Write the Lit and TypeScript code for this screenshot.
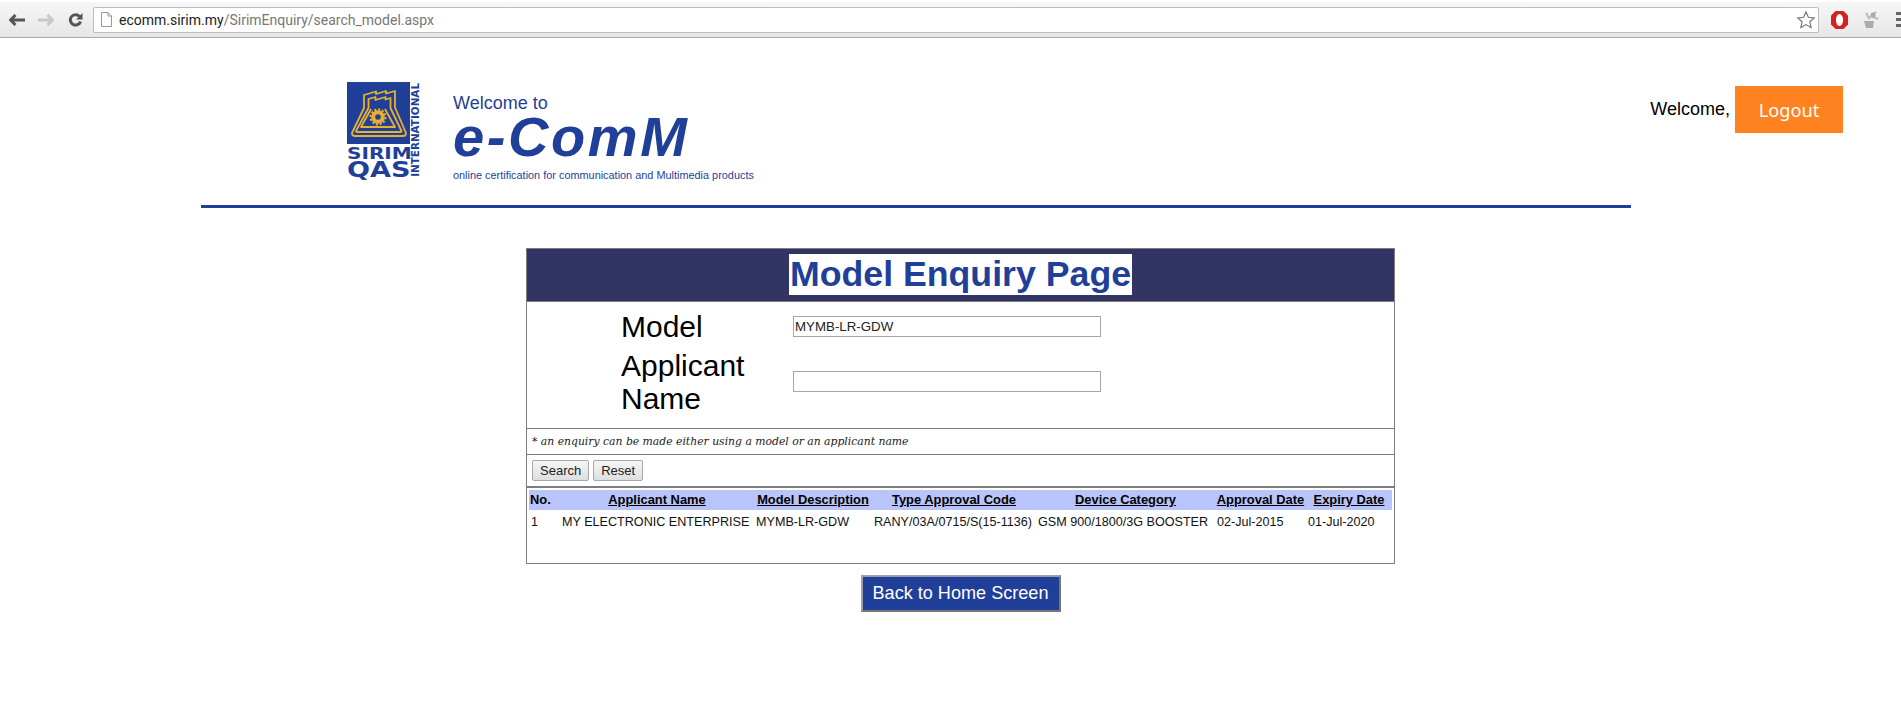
import { LitElement, html, css } from "lit";
import { customElement } from "lit/decorators.js";

@customElement("app-root")
export class AppRoot extends LitElement {
  static styles = css`
    :host { display: block; font-family: "Liberation Sans", Arial, sans-serif; color: #000; background: #fff; min-height: 706px; }
    * { box-sizing: border-box; }
    .chrome { height: 38px; background: linear-gradient(#f7f7f7, #e6e6e6); border-top: 2px solid #fff; border-bottom: 1px solid #a8a8a8; display: flex; align-items: center; padding: 0 0 0 9px; position: relative; overflow: hidden; }
    .tabline { position: absolute; left: 153px; right: 0; top: -2px; height: 2px; background: #b9b9b9; }
    .navs { display: flex; align-items: center; width: 84px; flex: none; }
    .navs svg { display: block; flex: none; }
    .navs .fwd { margin-left: 13px; }
    .navs .rel { margin-left: 14px; }
    .url { flex: 0 0 1726px; height: 26px; background: #fff; border: 1px solid #bdbdbd; border-radius: 2px; display: flex; align-items: center; padding: 0 2px 0 7px; font: 14px Roboto, "Liberation Sans", sans-serif; color: #777; }
    .url b { font-weight: 400; color: #222; }
    .url .doc { margin-right: 7px; flex: none; }
    .url .path { flex: 1; white-space: nowrap; }
    .ext { display: flex; align-items: center; margin-left: 11px; gap: 12px; flex: none; }
    .menu { width: 8px; display: flex; flex-direction: column; gap: 3px; margin-left: 3px; }
    .menu i { display: block; height: 3px; background: #666; }

    .head { display: flex; justify-content: space-between; align-items: flex-start; padding: 44px 58px 0 347px; height: 167px; }
    .brand { display: flex; }
    .logo { width: 73px; display: grid; grid-template-columns: 63px 10px; }
    .mark { display: flex; flex-direction: column; align-items: flex-start; width: 63px; }
    .square { width: 63px; height: 62px; display: block; }
    .sirim { font: 700 15.2px/15px "DejaVu Sans", "Liberation Sans", sans-serif; color: #1f3f99; margin-top: 3px; white-space: nowrap; transform: scaleX(1.32); transform-origin: left center; }
    .qas { font: 700 20.5px/17px "DejaVu Sans", "Liberation Sans", sans-serif; color: #1f3f99; white-space: nowrap; transform: scaleX(1.32); transform-origin: left center; }
    .intl { writing-mode: sideways-lr; font: 700 10.4px/10px "DejaVu Sans", "Liberation Sans", sans-serif; color: #1f3f99; text-align: center; height: 95px; white-space: nowrap; }
    .title { margin-left: 33px; color: #1f3f99; }
    .wel { font-size: 18px; line-height: 20px; margin-top: 11px; }
    .ecomm { font-size: 56px; line-height: 46px; font-weight: 700; font-style: italic; letter-spacing: 2.6px; margin-top: 1px; white-space: nowrap; }
    .tag { font-size: 10.9px; line-height: 12px; margin-top: 9px; white-space: nowrap; }
    .user { display: flex; align-items: center; font-size: 18px; padding-top: 4px; }
    .logout { margin-left: 5px; width: 108px; height: 47px; background: #ff8220; color: #fff; display: flex; align-items: center; justify-content: center; font: 400 18.2px "Noto Sans", "Liberation Sans", sans-serif; }
    .rule { width: 1430px; height: 3px; margin-left: 201px; background: #1f3f99; }

    .panel { width: 869px; margin: 40px 0 0 526px; border: 1px solid #7d7d7d; }
    .ptitle { height: 53px; padding-bottom: 1px; background: #323464; border-bottom: 1px solid #7d7d7d; display: flex; justify-content: center; align-items: center; }
    .ptitle span { background: #fff; color: #1f3f99; font-size: 35.7px; font-weight: 700; line-height: 41px; padding: 0 1px; }
    .form { height: 127px; padding: 5px 0 0 94px; border-bottom: 1px solid #7d7d7d; display: grid; grid-template-columns: 172px 308px; grid-template-rows: 38px 73px; align-items: center; font-size: 30px; line-height: 33px; }
    .input { width: 308px; height: 21px; border: 1px solid #a6a6a6; font-size: 13.3px; line-height: 19px; padding-left: 1px; color: #222; }
    .note { height: 26px; padding-left: 5px; display: flex; align-items: center; border-bottom: 1px solid #7d7d7d; font: italic 10.8px "DejaVu Serif", "Liberation Serif", serif; color: #222; }
    .btns { height: 33px; padding: 5px 0 0 5px; display: flex; gap: 4px; border-bottom: 2px solid #7d7d7d; }
    .btn { height: 21px; padding: 0 7px; display: flex; align-items: center; border: 1px solid #a9a9a9; border-radius: 2px; background: linear-gradient(#f6f6f6, #dedede); font-size: 13px; color: #222; }
    table { border-collapse: collapse; table-layout: fixed; width: 863px; margin: 2px 0 0 2px; font-size: 12.6px; }
    th { height: 20px; padding: 0 0 1px; background: #b9c4fb; text-decoration: underline; font-size: 12.9px; font-weight: 700; text-align: center; white-space: nowrap; }
    th:first-child { text-align: left; text-decoration: none; padding-left: 1px; }
    td { height: 24px; padding: 0 0 1px 2px; white-space: nowrap; color: #111; vertical-align: middle; }
    .spacer { height: 29px; }
    .foot { display: flex; justify-content: center; width: 869px; margin: 11px 0 0 526px; }
    .back { width: 200px; height: 37px; background: #1f3f99; color: #fff; border: 2px solid; border-color: #9aa0b0 #777 #777 #9aa0b0; font-size: 18.1px; display: flex; align-items: center; justify-content: center; }
  `;

  private headers = ["No.", "Applicant Name", "Model Description", "Type Approval Code", "Device Category", "Approval Date", "Expiry Date"];
  private widths = [31, 194, 118, 164, 179, 91, 86];
  private row = ["1", "MY ELECTRONIC ENTERPRISE", "MYMB-LR-GDW", "RANY/03A/0715/S(15-1136)", "GSM 900/1800/3G BOOSTER", "02-Jul-2015", "01-Jul-2020"];

  render() {
    return html`
      <div class="chrome">
        <div class="tabline"></div>
        <div class="navs">
          <svg width="16" height="12" viewBox="0 0 16 12"><path d="M6.500 1 1.500 6 6.500 11M2 6h14" fill="none" stroke="#555" stroke-width="3"/></svg>
          <svg class="fwd" width="16" height="12" viewBox="0 0 16 12"><path d="M9.500 1l5 5-5 5M14 6H0" fill="none" stroke="#c8c8c8" stroke-width="3"/></svg>
          <svg class="rel" width="15" height="15" viewBox="0 0 15 15"><path d="M11.500 4.500A5.200 5.200 0 1 0 12.500 9.500" fill="none" stroke="#555" stroke-width="3"/><path d="M14.500 1v6.500H8z" fill="#555"/></svg>
        </div>
        <div class="url">
          <svg class="doc" width="11" height="15" viewBox="0 0 11 15"><path d="M.5.5h6.500l3.500 3.500v10.500h-10zM7 .5v3.500h3.500" fill="#fff" stroke="#999"/></svg>
          <span class="path"><b>ecomm.sirim.my</b>/SirimEnquiry/search_model.aspx</span>
          <svg width="20" height="20" viewBox="0 0 20 20"><path d="M10 2l2.400 5.300 5.800.6-4.300 3.900 1.200 5.700L10 14.600l-5.100 2.900 1.200-5.700L1.800 7.900l5.800-.6z" fill="#fff" stroke="#777" stroke-width="1.200"/></svg>
        </div>
        <div class="ext">
          <svg width="19" height="20" viewBox="0 0 19 20"><path d="M5.500 1h8L18 5.500v9L13.500 19h-8L1 14.500v-9z" fill="#d8201c"/><ellipse cx="9.500" cy="10" rx="3.600" ry="6" fill="#fff"/></svg>
          <svg width="20" height="20" viewBox="0 0 20 20"><path d="M3 11h10l-1 7H5z" fill="#a5adad"/><path d="M7 9l8-7M10 6l7 3M8 8 5 3" stroke="#b5bdbd" stroke-width="2" fill="none"/><circle cx="12" cy="5" r="2.500" fill="#a5adad"/></svg>
          <div class="menu"><i></i><i></i><i></i></div>
        </div>
      </div>

      <div class="head">
        <div class="brand">
          <div class="logo">
            <div class="mark">
              <svg class="square" viewBox="0 0 63 62">
                <rect width="63" height="62" fill="#1f3f99"/>
                <g fill="none" stroke="#e9b02c" stroke-width="1.800" stroke-linejoin="round">
                  <path d="M17 13l12-3.500v2.500l10-3v2.500l9-2.500v16.500L59 51q0 3-3 3H8q-3 0-3-3l12-25z"/>
                  <path d="M21.500 17l7-2v3l10-3v2.500l5-1.500v10l11 23q0 1-1 1H10q-1 0-1-1l12.500-23z"/>
                  <path d="M24 27 14 45h34L38 27"/>
                </g>
                <circle cx="31" cy="35" r="4.800" fill="none" stroke="#e9b02c" stroke-width="4"/>
                <circle cx="31" cy="35" r="7.500" fill="none" stroke="#e9b02c" stroke-width="2" stroke-dasharray="2.200 1.700"/>
              </svg>
              <div class="sirim">SIRIM</div>
              <div class="qas">QAS</div>
            </div>
            <div class="intl">INTERNATIONAL</div>
          </div>
          <div class="title">
            <div class="wel">Welcome to</div>
            <div class="ecomm">e-ComM</div>
            <div class="tag">online certification for communication and Multimedia products</div>
          </div>
        </div>
        <div class="user">Welcome,<div class="logout">Logout</div></div>
      </div>
      <div class="rule"></div>

      <div class="panel">
        <div class="ptitle"><span>Model Enquiry Page</span></div>
        <div class="form">
          <div>Model</div><div class="input">MYMB-LR-GDW</div>
          <div>Applicant<br />Name</div><div class="input"></div>
        </div>
        <div class="note">* an enquiry can be made either using a model or an applicant name</div>
        <div class="btns"><div class="btn">Search</div><div class="btn">Reset</div></div>
        <table>
          <colgroup>${this.widths.map((w) => html`<col style="width:${w}px" />`)}</colgroup>
          <tr>${this.headers.map((h) => html`<th>${h}</th>`)}</tr>
          <tr>${this.row.map((c) => html`<td>${c}</td>`)}</tr>
        </table>
        <div class="spacer"></div>
      </div>
      <div class="foot"><div class="back">Back to Home Screen</div></div>
    `;
  }
}
